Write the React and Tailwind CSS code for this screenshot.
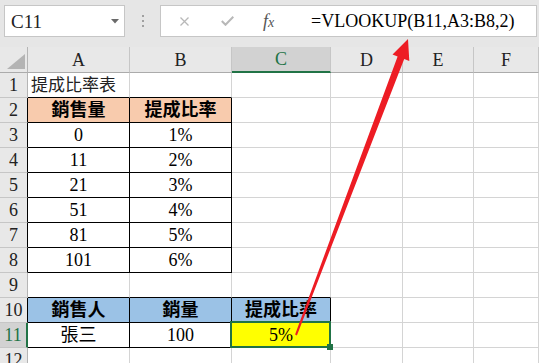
import React from "react";

const RC = { g: "border-r-[#d4d4d4]", k: "border-r-black" };
const BC = { g: "border-b-[#d4d4d4]", k: "border-b-black" };

const COLS = "grid grid-cols-[28px_102px_102px_99px_72px_71px_1fr]";

function C({ r = "g", b = "g", bg = "", left, bold, children, extra = "" }) {
  return (
    <div
      className={`relative border-r border-b ${RC[r]} ${BC[b]} ${bg} flex items-center ${
        left ? "justify-start pl-[3px] text-[17px] text-[#222]" : "justify-center text-[18px] text-black"
      } ${bold ? "font-bold" : ""} leading-none whitespace-nowrap ${extra}`}
    >
      {children}
    </div>
  );
}

function RH({ n, r = "g", sel }) {
  return (
    <div
      className={`border-b border-b-[#c6c6c6] ${
        sel ? "border-r-2 border-r-[#217346] bg-[#d2d2d2] text-[#217346]" : `border-r ${r === "k" ? "border-r-black" : "border-r-[#b5b5b5]"} bg-[#e8e8e8] text-[#222]`
      } flex items-center justify-center text-[18px] leading-none`}
    >
      {n}
    </div>
  );
}

function Row({ children }) {
  return <div className={`${COLS} h-[25px]`}>{children}</div>;
}

export default function App() {
  const data = [
    ["0", "1%"],
    ["11", "2%"],
    ["21", "3%"],
    ["51", "4%"],
    ["81", "5%"],
    ["101", "6%"],
  ];
  return (
    <div className="relative w-[539px] h-[363px] overflow-hidden bg-white font-['Liberation_Serif','Noto_Sans_CJK_TC',serif]">
      {/* toolbar */}
      <div className="h-[47px] bg-[#e6e6e6] flex items-start pt-[5px]">
        <div className="relative ml-[4px] w-[121px] h-[32px] bg-white border border-[#c6c6c6] flex items-center pl-[6px] text-[19px] text-[#222] leading-none">
          C11
          <svg className="absolute left-[106px] top-[13px]" width="8" height="5" viewBox="0 0 8 5">
            <polygon points="0,0 8,0 4,4.5" fill="#6a6a6a" />
          </svg>
        </div>
        <div className="w-[35px] h-[32px] flex flex-col items-center justify-center gap-[3px]">
          <div className="w-[2px] h-[2px] bg-[#a0a0a0]" />
          <div className="w-[2px] h-[2px] bg-[#a0a0a0]" />
          <div className="w-[2px] h-[2px] bg-[#a0a0a0]" />
        </div>
        <div className="w-[377px] h-[32px] bg-white border border-[#c6c6c6] flex items-center">
          <svg className="ml-[19px]" width="9" height="9" viewBox="0 0 9 9">
            <path d="M0.5 0.5 L8.5 8.5 M8.5 0.5 L0.5 8.5" stroke="#b8b8b8" strokeWidth="1.3" fill="none" />
          </svg>
          <svg className="ml-[32px]" width="13" height="10" viewBox="0 0 13 10">
            <path d="M0.8 5 L4.5 8.8 L12.3 0.8" stroke="#b8b8b8" strokeWidth="2" fill="none" />
          </svg>
          <span className="ml-[29px] w-[16px] italic text-[18px] text-[#555] leading-none font-['Liberation_Serif',serif] whitespace-nowrap">
            f<span className="text-[14px]">x</span>
          </span>
          <span className="ml-[32px] text-[18px] text-black leading-none whitespace-nowrap">
            =VLOOKUP(B11,A3:B8,2)
          </span>
        </div>
      </div>

      {/* column headers */}
      <div className={`${COLS} h-[26px] bg-[#e8e8e8]`}>
        <div className="border-r border-b border-r-[#b5b5b5] border-b-[#ababab] flex items-end justify-end pr-[2px] pb-[3px]">
          <svg width="18" height="15" viewBox="0 0 18 15">
            <polygon points="18,0 18,15 0,15" fill="#b4b4b4" />
          </svg>
        </div>
        {["A", "B"].map((l) => (
          <div key={l} className="border-r border-b border-r-[#c6c6c6] border-b-[#ababab] flex items-center justify-center text-[18px] text-[#222] leading-none">
            {l}
          </div>
        ))}
        <div className="border-r border-r-[#c6c6c6] border-b-2 border-b-[#217346] bg-[#d2d2d2] flex items-center justify-center text-[18px] text-[#217346] leading-none">
          C
        </div>
        {["D", "E", "F"].map((l) => (
          <div key={l} className="border-r border-b border-r-[#c6c6c6] border-b-[#ababab] flex items-center justify-center text-[18px] text-[#222] leading-none">
            {l}
          </div>
        ))}
      </div>

      {/* row 1 */}
      <Row>
        <RH n="1" />
        <C b="k" left>提成比率表</C>
        <C b="k" />
        <C />
        <C />
        <C />
        <C />
      </Row>
      {/* row 2 */}
      <Row>
        <RH n="2" r="k" />
        <C r="k" b="k" bg="bg-[#f8cbad]" bold>銷售量</C>
        <C r="k" b="k" bg="bg-[#f8cbad]" bold>提成比率</C>
        <C />
        <C />
        <C />
        <C />
      </Row>
      {data.map(([a, p], i) => (
        <Row key={a}>
          <RH n={String(i + 3)} r="k" />
          <C r="k" b="k">{a}</C>
          <C r="k" b="k">{p}</C>
          <C />
          <C />
          <C />
          <C />
        </Row>
      ))}
      {/* row 9 */}
      <Row>
        <RH n="9" />
        <C b="k" />
        <C b="k" />
        <C b="k" />
        <C />
        <C />
        <C />
      </Row>
      {/* row 10 */}
      <Row>
        <RH n="10" r="k" />
        <C r="k" b="k" bg="bg-[#9bc2e6]" bold>銷售人</C>
        <C r="k" b="k" bg="bg-[#9bc2e6]" bold>銷量</C>
        <C r="k" b="k" bg="bg-[#9bc2e6]" bold>提成比率</C>
        <C />
        <C />
        <C />
      </Row>
      {/* row 11 */}
      <Row>
        <RH n="11" sel />
        <C r="k" b="k">張三</C>
        <C r="k" b="k">100</C>
        <C r="k" b="k" bg="bg-[#ffff00]" extra="overflow-visible">
          5%
          <div className="absolute -left-[2px] -top-[2px] -right-[1px] -bottom-[1px] border-2 border-[#217346] z-[5]" />
          <div className="absolute left-[95px] top-[21px] w-[6px] h-[6px] bg-[#217346] z-[6]" />
        </C>
        <C />
        <C />
        <C />
      </Row>
      {/* row 12 */}
      <Row>
        <RH n="12" />
        <C />
        <C />
        <C />
        <C />
        <C />
        <C />
      </Row>

      {/* red arrow overlay */}
      <svg className="absolute left-0 top-0 z-10 pointer-events-none" width="539" height="363" viewBox="0 0 539 363">
        <polygon
          points="295.1,334.6 397.6,56.5 392.5,54.5 408,39 409.3,60.9 404.2,58.9 296.9,335.4"
          fill="#ed1c24"
        />
      </svg>
    </div>
  );
}
